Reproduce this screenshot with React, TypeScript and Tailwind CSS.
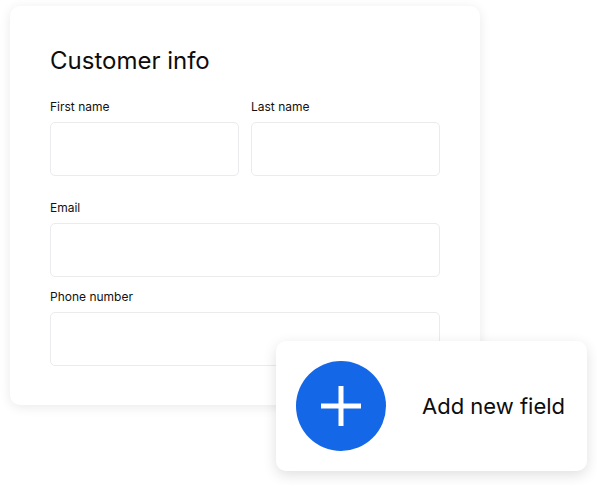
import React from 'react';

const Field: React.FC<{ label: string; className?: string }> = ({ label, className }) => (
  <div className={className}>
    <label className="block text-[12px] leading-4 text-[#111]">{label}</label>
    <div className="mt-[7px] h-[54px] rounded-[5px] border border-[#ebebee] bg-white" />
  </div>
);

export default function App() {
  return (
    <div className="relative h-[485px] w-[597px] bg-white font-['Inter',sans-serif] text-black">
      {/* Form card */}
      <div className="ml-[10px] pt-[6px]">
        <div className="h-[399px] w-[470px] rounded-[10px] bg-white px-10 pt-[39px] shadow-[0_2px_12px_rgba(0,0,0,0.09)]">
          <h1 className="text-[24px] leading-8 text-[#0d0d0d]">Customer info</h1>
          <div className="mt-[22px] grid grid-cols-2 gap-x-[12px]">
            <Field label="First name" />
            <Field label="Last name" />
          </div>
          <Field label="Email" className="mt-[24px]" />
          <Field label="Phone number" className="mt-[12px]" />
        </div>
      </div>

      {/* Add field button card */}
      <div className="absolute left-[276px] top-[341px] flex h-[130px] w-[311px] items-center rounded-[10px] bg-white pl-5 shadow-[0_4px_14px_rgba(0,0,0,0.13)]">
        <div className="flex h-[90px] w-[90px] items-center justify-center rounded-full bg-[#1467e6]">
          <svg width="40" height="40" viewBox="0 0 40 40">
            <rect x="0" y="17.5" width="40" height="5" fill="white" />
            <rect x="17.5" y="0" width="5" height="40" fill="white" />
          </svg>
        </div>
        <span className="ml-[36px] text-[22px] leading-7 text-[#0d0d0d]">Add new field</span>
      </div>
    </div>
  );
}
